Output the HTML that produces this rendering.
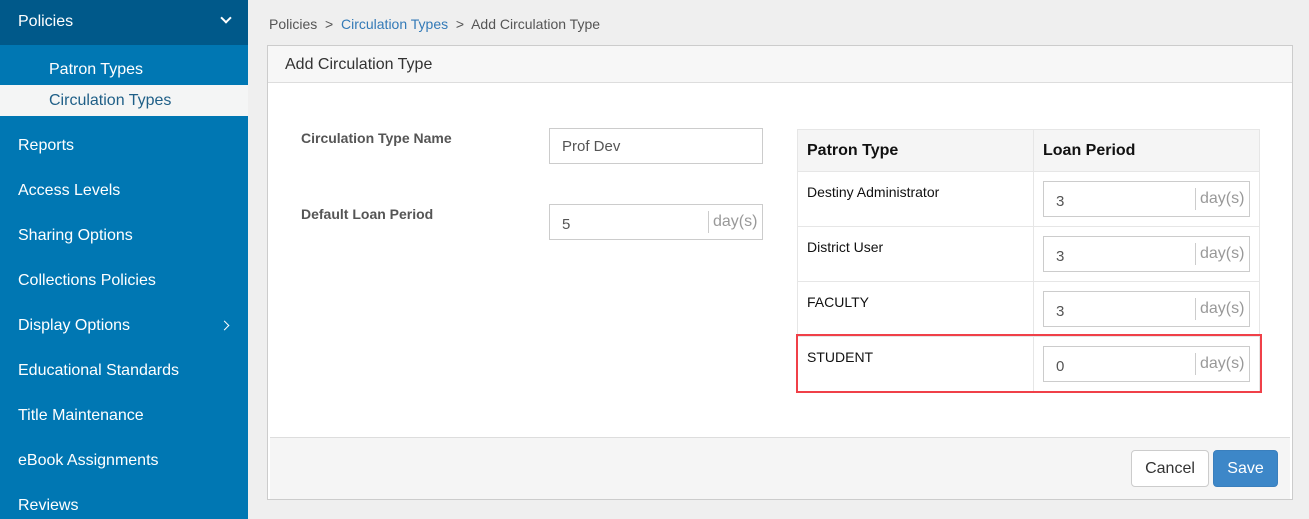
<!DOCTYPE html>
<html style="overflow:hidden;height:519px"><head><style>
*{box-sizing:border-box;margin:0;padding:0}
body{width:1309px;height:519px;overflow:hidden;background:#efefef;font-family:"Liberation Sans",Arial,sans-serif;position:relative}
.sb{position:absolute;left:0;top:0;width:248px;height:519px;background:#0077b3;overflow:hidden}
.sb .top{height:45px;background:#00598a;color:#fff;font-size:16px;padding:13px 18px;position:relative}
.sb .sub{color:#fff;font-size:16px;padding-left:49px;height:31px;line-height:31px}
.sb .sub.act{background:#f4f5f5;color:#1f5f87}
.sb .it{color:#fff;font-size:16px;padding-left:18px;height:45px;line-height:45px;position:relative}
.chev{position:absolute;right:18px;top:16px;width:8px;height:8px;border-right:2px solid #fff;border-bottom:2px solid #fff}
.abs{position:absolute}
.bc{left:269px;top:16px;font-size:14px;color:#555}
.bc a{color:#337ab7}
.panel{left:267px;top:45px;width:1026px;height:455px;background:#fff;border:1px solid #ccc}
.ph{height:37px;background:#f7f7f7;border-bottom:1px solid #ddd;font-size:16px;color:#333;padding:10px 17px}
.pf{position:absolute;left:2px;right:2px;bottom:0;height:62px;background:#f5f5f5;border-top:1px solid #ddd}
.lbl{font-size:14px;font-weight:bold;color:#555}
.inp{border:1px solid #ccc;background:#fff;font-size:15px;color:#555;padding:0 12px;display:flex;align-items:center}
.ds{position:absolute;right:0;top:6px;bottom:6px;border-left:1px solid #ccc;color:#999;font-size:16px;padding-left:4px;width:54px;line-height:22px}
table{border-collapse:collapse;font-size:14px;color:#111}
td,th{border:1px solid #e6e6e6;vertical-align:top;text-align:left}
th{background:#f5f5f5;font-size:16px;height:42px;padding:12px 9px 0}
td{height:55px;padding:12px 9px}
td.c2{padding:9px 9px}
.btn{position:absolute;top:450px;height:37px;border-radius:4px;font-size:16px;line-height:35px;text-align:center}
</style></head><body>
<div class="sb">
<div class="top">Policies<span class="chev" style="transform:rotate(45deg);top:14px"></span></div>
<div class="sub" style="margin-top:9px">Patron Types</div>
<div class="sub act">Circulation Types</div>
<div style="height:7px"></div>
<div class="it">Reports</div>
<div class="it">Access Levels</div>
<div class="it">Sharing Options</div>
<div class="it">Collections Policies</div>
<div class="it">Display Options<span class="chev" style="transform:rotate(-45deg);right:20px;top:19px;width:7px;height:7px;border-width:1.5px"></span></div>
<div class="it">Educational Standards</div>
<div class="it">Title Maintenance</div>
<div class="it">eBook Assignments</div>
<div class="it">Reviews</div>
</div>
<div class="abs bc">Policies &nbsp;&gt;&nbsp; <a>Circulation Types</a> &nbsp;&gt;&nbsp; Add Circulation Type</div>
<div class="abs panel">
<div class="ph">Add Circulation Type</div>
<div class="pf"></div>
</div>
<div class="abs lbl" style="left:301px;top:130px">Circulation Type Name</div>
<div class="abs lbl" style="left:301px;top:206px">Default Loan Period</div>
<div class="abs inp" style="left:549px;top:128px;width:214px;height:36px">Prof Dev</div>
<div class="abs inp" style="left:549px;top:204px;width:214px;height:36px;padding-top:4px">5<span class="ds">day(s)</span></div>
<table class="abs" style="left:797px;top:129px;width:463px">
<tr><th style="width:236px">Patron Type</th><th>Loan Period</th></tr>
<tr><td>Destiny Administrator</td><td class="c2"><div class="inp" style="height:36px;position:relative;padding-top:4px">3<span class="ds">day(s)</span></div></td></tr>
<tr><td>District User</td><td class="c2"><div class="inp" style="height:36px;position:relative;padding-top:4px">3<span class="ds">day(s)</span></div></td></tr>
<tr><td>FACULTY</td><td class="c2"><div class="inp" style="height:36px;position:relative;padding-top:4px">3<span class="ds">day(s)</span></div></td></tr>
<tr><td>STUDENT</td><td class="c2"><div class="inp" style="height:36px;position:relative;padding-top:4px">0<span class="ds">day(s)</span></div></td></tr>
</table>
<div class="abs" style="left:796px;top:334px;width:466px;height:59px;border:2px solid #f04048"></div>
<div class="btn" style="left:1131px;width:78px;background:#fff;border:1px solid #ccc;color:#333">Cancel</div>
<div class="btn" style="left:1213px;width:65px;background:#3d87c8;border:1px solid #3a7fbd;color:#fff">Save</div>
</body></html>
